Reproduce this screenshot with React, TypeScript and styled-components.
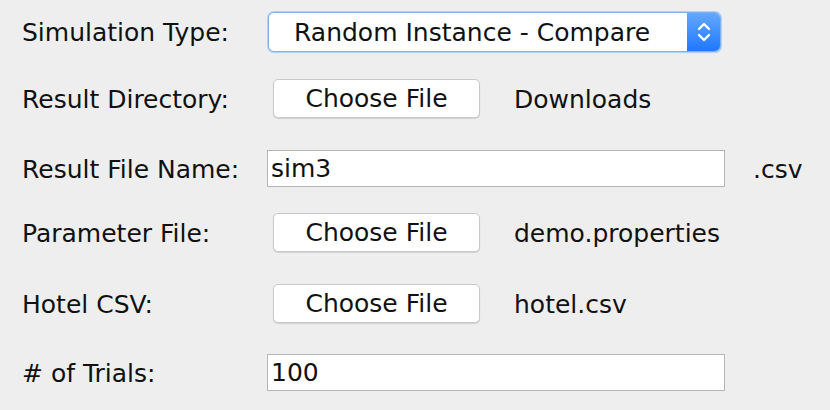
import styled, { createGlobalStyle } from "styled-components";

const GlobalStyle = createGlobalStyle`
  html, body {
    margin: 0;
    padding: 0;
    background: #eeeeee;
  }
  body {
    font-family: "DejaVu Sans", "Liberation Sans", sans-serif;
    color: #111;
  }
`;

const App = () => {
  return (
    <>
      <GlobalStyle />
      <Form>
        <Row gap={12}>
          <Label>Simulation Type:</Label>
          <Select>
            <SelectText>Random Instance - Compare</SelectText>
            <Stepper>
              <svg width="16" height="24" viewBox="0 0 16 24" fill="none">
                <path
                  d="M3 9 L8 4 L13 9"
                  stroke="#fff"
                  strokeWidth="2.4"
                  strokeLinecap="round"
                  strokeLinejoin="round"
                />
                <path
                  d="M3 15 L8 20 L13 15"
                  stroke="#fff"
                  strokeWidth="2.4"
                  strokeLinecap="round"
                  strokeLinejoin="round"
                />
              </svg>
            </Stepper>
          </Select>
        </Row>
        <Row gap={27}>
          <Label>Result Directory:</Label>
          <FileButton>Choose File</FileButton>
          <Value>Downloads</Value>
        </Row>
        <Row gap={32}>
          <Label>Result File Name:</Label>
          <Field>sim3</Field>
          <Suffix>.csv</Suffix>
        </Row>
        <Row gap={26}>
          <Label>Parameter File:</Label>
          <FileButton>Choose File</FileButton>
          <Value>demo.properties</Value>
        </Row>
        <Row gap={32}>
          <Label>Hotel CSV:</Label>
          <FileButton>Choose File</FileButton>
          <Value>hotel.csv</Value>
        </Row>
        <Row gap={31}>
          <Label># of Trials:</Label>
          <Field>100</Field>
        </Row>
      </Form>
    </>
  );
};

export default App;

const Form = styled.div`
  display: flex;
  flex-direction: column;
  padding-left: 22px;
  width: 808px;
`;

const Row = styled.div<{ gap: number }>`
  display: flex;
  align-items: center;
  margin-top: ${({ gap }) => gap}px;
  font-size: 25px;
  line-height: 30px;
`;

const Label = styled.div`
  width: 245px;
  flex-shrink: 0;
  padding-top: 2px;
  white-space: nowrap;
`;

const Select = styled.div`
  display: flex;
  align-items: stretch;
  width: 453px;
  height: 40px;
  margin-left: 1px;
  box-sizing: border-box;
  border: 1px solid #7fb0f0;
  border-radius: 6px;
  background: #fff;
  box-shadow: 0 0 0 1px #b3d1f7, 0 1px 1px rgba(0, 0, 0, 0.15);
  overflow: hidden;
`;

const SelectText = styled.div`
  flex: 1;
  display: flex;
  align-items: center;
  padding-left: 25px;
  padding-top: 1px;
  white-space: nowrap;
`;

const Stepper = styled.div`
  width: 33px;
  display: flex;
  align-items: center;
  justify-content: center;
  background: linear-gradient(#63a8ff, #1f78ff);
`;

const FileButton = styled.div`
  display: flex;
  align-items: center;
  justify-content: center;
  width: 207px;
  height: 39px;
  margin-left: 6px;
  box-sizing: border-box;
  padding-top: 1px;
  background: #fff;
  border: 1px solid #c9c9c9;
  border-radius: 5px;
  box-shadow: 0 1px 1px rgba(0, 0, 0, 0.12);
  white-space: nowrap;
`;

const Value = styled.div`
  margin-left: 34px;
  padding-top: 2px;
  white-space: nowrap;
`;

const Field = styled.div`
  display: flex;
  align-items: center;
  width: 458px;
  height: 37px;
  box-sizing: border-box;
  padding-left: 3px;
  padding-top: 1px;
  background: #fff;
  border: 1px solid #b5b5b5;
`;

const Suffix = styled.div`
  margin-left: 28px;
  padding-top: 2px;
`;
